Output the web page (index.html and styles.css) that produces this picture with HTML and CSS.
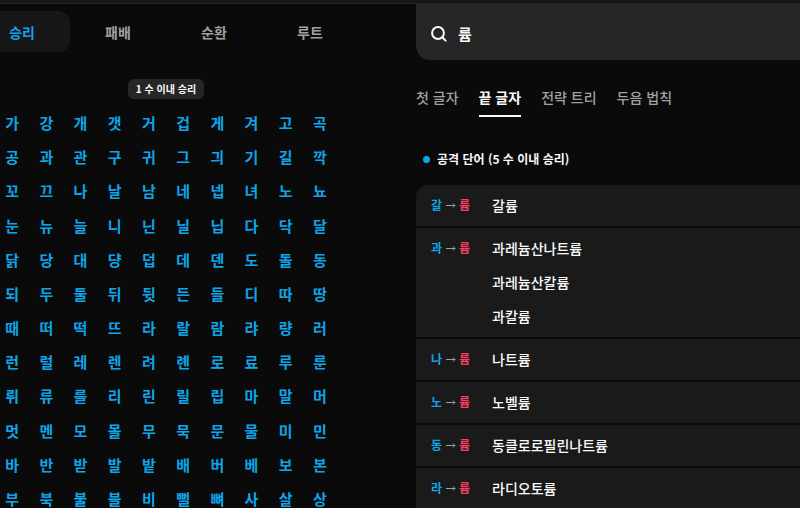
FILE: index.html
```html
<!DOCTYPE html>
<html lang="ko">
<head>
    <meta charset="UTF-8">
    <meta name="viewport" content="width=device-width, initial-scale=1.0">
    <title>륨 - 끝 글자</title>
    <link rel="stylesheet" href="styles.css">
</head>
<body>
    <header class="topbar"></header>

    <main class="layout">
        <section class="board">
            <nav class="board-tabs">
                <button type="button" class="board-tab active">승리</button>
                <button type="button" class="board-tab">패배</button>
                <button type="button" class="board-tab">순환</button>
                <button type="button" class="board-tab">루트</button>
            </nav>
            <div class="badge">1 수 이내 승리</div>
            <div class="chars" id="chars"></div>
        </section>

        <section class="detail">
            <label class="search">
                <svg class="search-icon" viewBox="0 0 16 16" aria-hidden="true">
                    <circle cx="7" cy="7" r="5.9"></circle>
                    <path d="M11.3 11.3L14.6 14.6"></path>
                </svg>
                <input type="text" class="search-input" value="륨" aria-label="글자 검색">
            </label>

            <nav class="detail-tabs">
                <button type="button" class="detail-tab">첫 글자</button>
                <button type="button" class="detail-tab active">끝 글자</button>
                <button type="button" class="detail-tab">전략 트리</button>
                <button type="button" class="detail-tab">두음 법칙</button>
            </nav>

            <h2 class="group-title">공격 단어 (5 수 이내 승리)</h2>
            <ul class="words" id="words"></ul>
        </section>
    </main>

    <script src="script.js"></script>
</body>
</html>
```
FILE: styles.css
```css
* {
    box-sizing: border-box;
}
body {
    margin: 0;
    height: 100vh;
    overflow: hidden;
    background-color: #0a0a0a;
    color: #fafafa;
    font-family: 'Noto Sans CJK KR', sans-serif;
    font-size: 14px;
    font-weight: 600;
    line-height: 20px;
}
button,
input {
    margin: 0;
    padding: 0;
    border: none;
    background: none;
    color: inherit;
    font: inherit;
}
button {
    cursor: pointer;
}
.topbar {
    height: 4px;
    background-color: #171717;
    border-bottom: 1px solid #222;
}
.layout {
    display: flex;
    align-items: flex-start;
}

/* 왼쪽 글자판 */
.board {
    flex: none;
    width: 384px;
    margin-left: -26px; /* 왼쪽 끝은 화면 밖으로 넘어감 */
    margin-right: 58px;
    padding-top: 7px;
    display: flex;
    flex-direction: column;
    align-items: center;
}
.board-tabs {
    display: grid;
    grid-template-columns: repeat(4, 1fr);
    width: 100%;
}
.board-tab {
    height: 41px;
    border-radius: 12px;
    color: #a1a1a1;
}
.board-tab.active {
    background-color: #171717;
    color: #0ea5e9;
}
.badge {
    margin-top: 27px;
    padding: 0 8px;
    border-radius: 6px;
    background-color: #262626;
    font-size: 10px;
    line-height: 20px;
}
.chars {
    display: grid;
    grid-template-columns: repeat(10, 1fr);
    grid-auto-rows: 1fr;
    width: 342px;
    height: 410px;
    margin-top: 7px;
}
.char {
    color: #0ea5e9;
    font-size: 15px;
}

/* 오른쪽 단어 목록 */
.detail {
    flex: 1;
    min-width: 0;
}
.search {
    display: flex;
    align-items: center;
    gap: 11px;
    height: 56px;
    padding: 4px 15px 0;
    border-bottom-left-radius: 14px;
    background-color: #262626;
}
.search-icon {
    flex: none;
    width: 16px;
    height: 16px;
    fill: none;
    stroke: #fafafa;
    stroke-width: 2;
    stroke-linecap: round;
}
.search-input {
    flex: 1;
    min-width: 0;
    outline: none;
    font-size: 15px;
}
.detail-tabs {
    display: flex;
    gap: 20px;
    margin-top: 24px;
}
.detail-tab {
    height: 33px;
    padding-bottom: 6px;
    border-bottom: 2px solid transparent;
    color: #a1a1a1;
    font-weight: 500;
}
.detail-tab.active {
    border-bottom-color: #fafafa;
    color: #fafafa;
    font-weight: 600;
}
.group-title {
    display: flex;
    align-items: center;
    gap: 7px;
    margin: 32px 0 16px 7px;
    font-size: 12px;
    font-weight: 600;
    line-height: 20px;
}
.group-title::before {
    content: '';
    width: 7px;
    height: 7px;
    border-radius: 50%;
    background-color: #0ea5e9;
}
.words {
    display: flex;
    flex-direction: column;
    gap: 2px;
    margin: 0;
    padding: 0;
    list-style: none;
}
.word-row {
    display: flex;
    padding: 3px 15px 4px;
    background-color: #1a1a1a;
    line-height: 34px;
}
.word-row:first-child {
    border-top-left-radius: 12px;
}
.route {
    display: flex;
    align-items: center;
    justify-content: space-between;
    width: 39px;
    height: 34px;
    margin-right: 22px;
    font-size: 12px;
}
.from {
    color: #0ea5e9;
}
.to {
    color: #f43f5e;
}
.arrow {
    width: 10px;
    height: 6px;
    fill: none;
    stroke: #a1a1a1;
}
.word {
    font-weight: 500;
}
```
FILE: script.js
```js
const charRows = [
    '가강개갯거겁게겨고곡',
    '공과관구귀그긔기길깍',
    '꼬끄나날남네넵녀노뇨',
    '눈뉴늘니닌닐닙다닥달',
    '닭당대댱덥데덴도돌동',
    '되두둘뒤뒷든들디따땅',
    '때떠떡뜨라랄람랴량러',
    '런럴레렌려롄로료루룬',
    '뤼류를리린릴립마말머',
    '멋멘모몰무묵문물미민',
    '바반받발밭배버베보본',
    '부북불블비뻘뼈사살상'
];

const last = '륨';
const wordGroups = [
    { first: '갈', words: ['갈륨'] },
    { first: '과', words: ['과레늄산나트륨', '과레늄산칼륨', '과칼륨'] },
    { first: '나', words: ['나트륨'] },
    { first: '노', words: ['노벨륨'] },
    { first: '동', words: ['동클로로필린나트륨'] },
    { first: '라', words: ['라디오토륨'] }
];

document.getElementById('chars').innerHTML = charRows
    .flatMap(row => [...row])
    .map(char => `<button type="button" class="char">${char}</button>`)
    .join('');

document.getElementById('words').innerHTML = wordGroups.map(group => `
    <li class="word-row">
        <div class="route">
            <span class="from">${group.first}</span>
            <svg class="arrow" viewBox="0 0 10 6" aria-hidden="true"><path d="M0 3.5H9M7 1.5L9 3.5L7 5.5"></path></svg>
            <span class="to">${last}</span>
        </div>
        <div class="word-list">
            ${group.words.map(word => `<div class="word">${word}</div>`).join('')}
        </div>
    </li>
`).join('');
```
